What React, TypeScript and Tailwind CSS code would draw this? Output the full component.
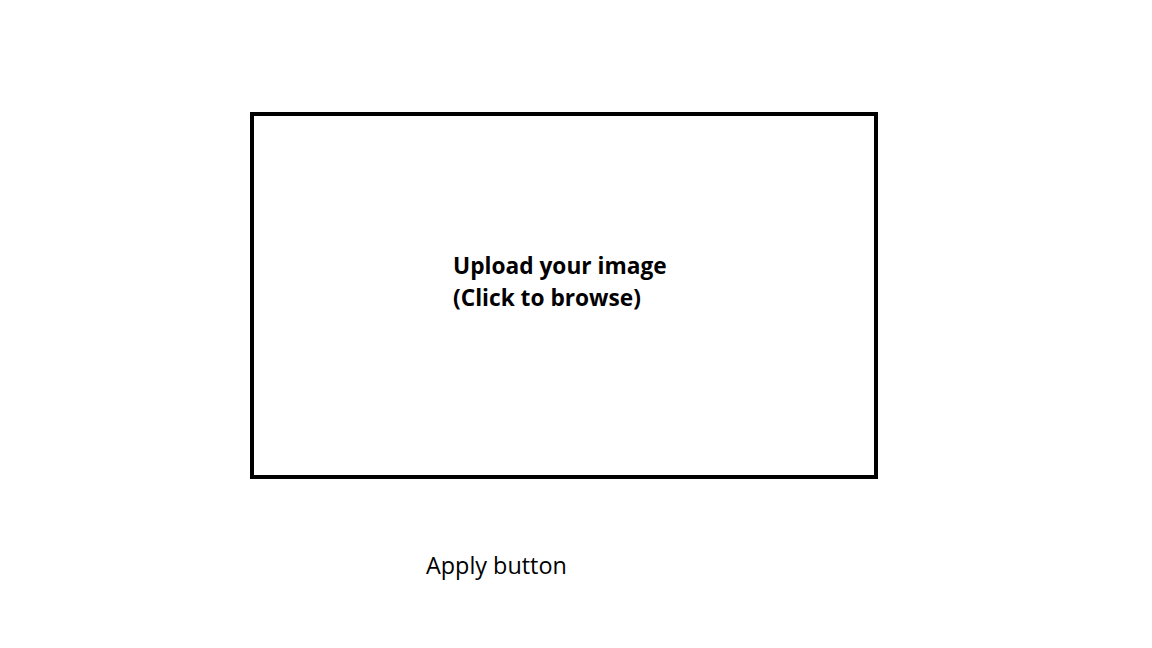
export default function App() {
  return (
    <div className="w-[1152px] h-[648px] bg-white text-black pt-[112px] pl-[250px]" style={{ fontFamily: '"Open Sans", "Liberation Sans", sans-serif' }}>
      <div className="w-[628px] h-[367px] border-4 border-black pl-[199px] pt-[134px]">
        <div className="font-bold text-[22.7px] leading-[32px]">
          <p>Upload your image</p>
          <p>(Click to browse)</p>
        </div>
      </div>
      <div className="mt-[72px] ml-[176px] text-[23.4px] leading-[28px]">Apply button</div>
    </div>
  );
}
